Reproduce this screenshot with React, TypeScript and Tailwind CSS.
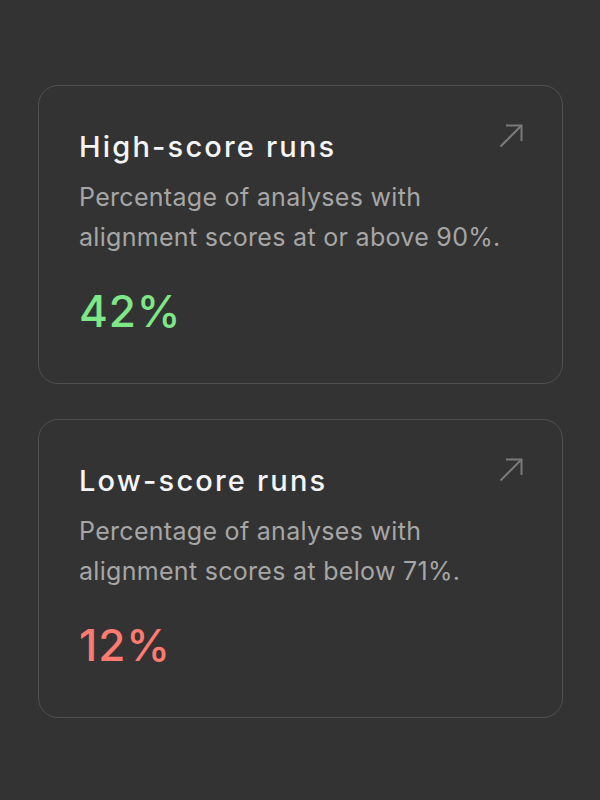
import React from 'react';

type Stat = {
    title: string;
    description: string;
    value: string;
    tone: 'good' | 'bad';
};

const stats: Stat[] = [
    {
        title: 'High-score runs',
        description: 'Percentage of analyses with alignment scores at or above 90%.',
        value: '42%',
        tone: 'good',
    },
    {
        title: 'Low-score runs',
        description: 'Percentage of analyses with alignment scores at below 71%.',
        value: '12%',
        tone: 'bad',
    },
];

// thin diagonal arrow in the card corner
function CornerArrow() {
    return (
        <svg
            width="24"
            height="24"
            viewBox="0 0 24 24"
            fill="none"
            stroke="currentColor"
            strokeWidth="2"
            className="absolute right-[39px] top-[38px] text-[#7a7a7a]"
        >
            <path d="M1.5 22.5 L22.5 1.5" />
            <path d="M7 1.5 H22.5 V17" />
        </svg>
    );
}

function StatCard({ stat }: { stat: Stat }) {
    return (
        <div className="relative h-[299px] rounded-[20px] border border-[#505050] bg-[#333333] px-10 pt-[43px]">
            <CornerArrow />
            <h2 className="text-[29px] leading-[36px] font-medium tracking-[0.075em] text-[#f4f5f7]">
                {stat.title}
            </h2>
            <p className="mt-[12px] max-w-[440px] text-[25px] leading-[40px] tracking-[0.012em] text-[#a6a6a6]">
                {stat.description}
            </p>
            <div
                className={`mt-[28px] text-[44px] leading-[52px] font-medium tracking-[0.02em] ${
                    stat.tone === 'good' ? 'text-[#7ee787]' : 'text-[#ff7a70]'
                }`}
            >
                {stat.value}
            </div>
        </div>
    );
}

export default function App() {
    return (
        <div
            className="min-h-[800px] w-[600px] bg-[#333333] pl-[38px] pr-[37px] pt-[85px]"
            style={{ fontFamily: 'Inter, "Noto Sans", sans-serif' }}
        >
            <div className="flex flex-col gap-[35px]">
                {stats.map((s) => (
                    <StatCard key={s.title} stat={s} />
                ))}
            </div>
        </div>
    );
}
